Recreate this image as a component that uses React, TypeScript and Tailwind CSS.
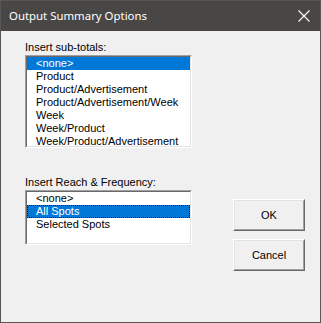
import { useState } from 'react';

const subTotals = [
  '<none>',
  'Product',
  'Product/Advertisement',
  'Product/Advertisement/Week',
  'Week',
  'Week/Product',
  'Week/Product/Advertisement',
];

const reachOptions = ['<none>', 'All Spots', 'Selected Spots'];

function ListBox({
  items,
  selected,
  focused,
  height,
}: {
  items: string[];
  selected: number;
  focused?: boolean;
  height: string;
}) {
  return (
    <div className="border border-t-[#a0a0a0] border-l-[#a0a0a0] border-b-white border-r-white">
      <div className={`border border-t-[#696969] border-l-[#696969] border-b-[#e3e3e3] border-r-[#e3e3e3] bg-white ${height}`}>
        {items.map((item, i) => (
          <div
            key={item}
            className={`h-[13px] leading-[13px] pl-[9px] whitespace-nowrap ${
              i === selected ? 'bg-[#0078d7] text-white' : 'text-black'
            } ${i === selected && focused ? 'outline-1 outline-dotted outline-[#1a1a1a] -outline-offset-1' : ''}`}
          >
            {item}
          </div>
        ))}
      </div>
    </div>
  );
}

function Button({ label }: { label: string }) {
  return (
    <div className="w-[72px] h-[32px] border border-t-white border-l-white border-b-[#696969] border-r-[#696969]">
      <div className="h-full border border-t-[#e3e3e3] border-l-[#e3e3e3] border-b-[#a0a0a0] border-r-[#a0a0a0] bg-[#f0f0f0] flex items-center justify-center text-black">
        {label}
      </div>
    </div>
  );
}

export default function App() {
  const [sub] = useState(0);
  const [reach] = useState(1);

  return (
    <div className="w-[321px] h-[323px] flex flex-col border border-[#575757] bg-[#f0f0f0] font-['Liberation_Sans',sans-serif] text-[11px]">
      {/* Title bar */}
      <div className="h-[30px] bg-[#494745] flex items-center justify-between pl-2 pr-[8px] shrink-0">
        <span className="text-white text-[11.4px] font-['Noto_Sans',sans-serif] leading-none pb-[1px]">
          Output Summary Options
        </span>
        <svg width="12" height="12" viewBox="0 0 12 12" className="mr-[2px]">
          <path d="M0.5 0.5 L11.5 11.5 M11.5 0.5 L0.5 11.5" stroke="white" strokeWidth="1.1" />
        </svg>
      </div>

      {/* Body */}
      <div className="flex pl-6 pt-[10px]">
        <div className="w-[167px] flex flex-col">
          <div className="h-[13px] leading-[13px] text-black mb-[1px]">Insert sub-totals:</div>
          <ListBox items={subTotals} selected={sub} height="h-[91px]" />
          <div className="h-[13px] leading-[13px] text-black mt-[28px] mb-[1px]">Insert Reach &amp; Frequency:</div>
          <ListBox items={reachOptions} selected={reach} focused height="h-[53px]" />
        </div>
        <div className="ml-[41px] mt-[158px] flex flex-col gap-2">
          <Button label="OK" />
          <Button label="Cancel" />
        </div>
      </div>
    </div>
  );
}
